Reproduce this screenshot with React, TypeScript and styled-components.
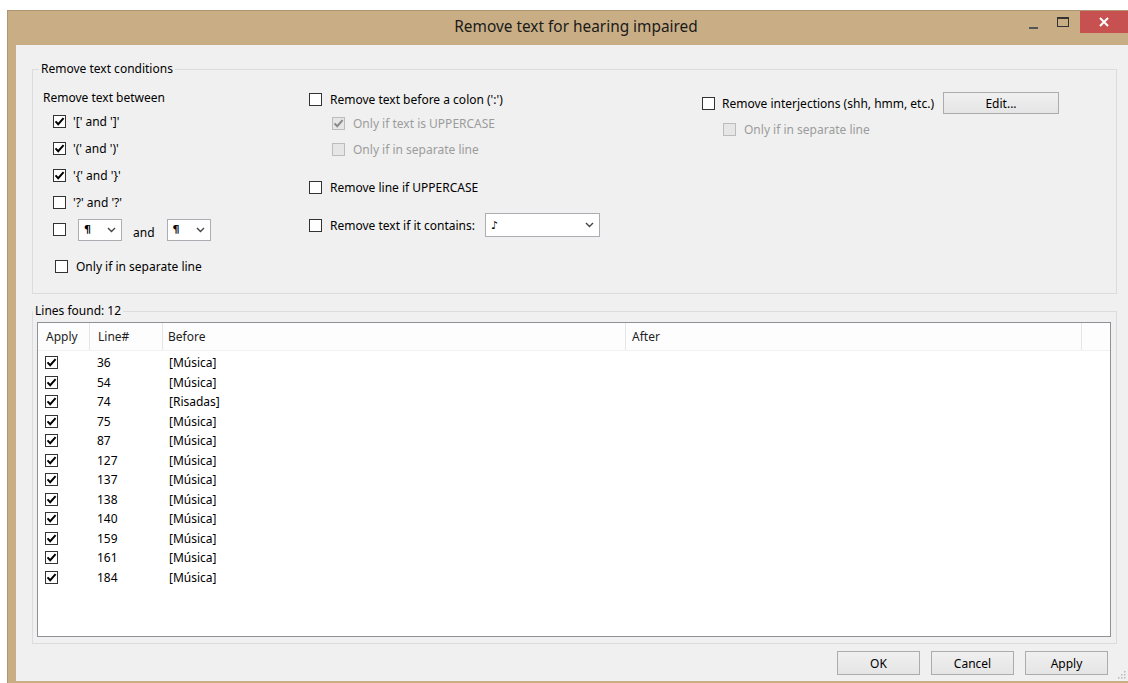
import React from 'react';
import styled, { createGlobalStyle } from 'styled-components';

const GlobalStyle = createGlobalStyle`
  * { box-sizing: border-box; }
  html, body { margin: 0; padding: 0; background: #ffffff; }
  body {
    font-family: 'Noto Sans', 'DejaVu Sans', sans-serif;
    font-size: 12px;
    color: #000000;
  }
`;

const Desktop = styled.div`
  width: 1128px;
  height: 683px;
  padding: 10px 0 0 7px;
  overflow: hidden;
`;

const Window = styled.div`
  width: 1121px;
  height: 673px;
  display: flex;
  flex-direction: column;
  background: #c9ae85;
  border-top: 1px solid #b09670;
  border-left: 1px solid #b09670;
`;

const TitleBar = styled.div`
  height: 34px;
  display: flex;
  align-items: flex-start;
`;

const Title = styled.div`
  flex: 1;
  padding-left: 124px;
  text-align: center;
  line-height: 32px;
  font-size: 15.4px;
  color: #1a1a1a;
`;

const CaptionButton = styled.div<{ $w: number; $close?: boolean }>`
  width: ${p => p.$w}px;
  height: 22px;
  display: flex;
  align-items: center;
  justify-content: center;
  background: ${p => (p.$close ? '#c75050' : 'transparent')};
`;

const Body = styled.div`
  flex: 1;
  padding: 0 0 2px 8px;
  display: flex;
`;

const Client = styled.div`
  position: relative;
  flex: 1;
  background: #f0f0f0;
  padding: 16px 11px 6px 16px;
  display: flex;
  flex-direction: column;
`;

const Group = styled.fieldset<{ $pad: string; $mt?: number }>`
  margin: ${p => p.$mt ?? 0}px 0 0 0;
  min-inline-size: 0;
  padding: ${p => p.$pad};
  border: 1px solid #dcdcdc;
`;

const Legend = styled.legend`
  margin-left: -4px;
  padding: 0 2px;
  line-height: 16px;
  font-size: 12px;
`;

const Conditions = styled.div`
  display: grid;
  grid-template-columns: 266px 393px 1fr;
`;

const Column = styled.div<{ $top?: number }>`
  display: flex;
  flex-direction: column;
  padding-top: ${p => p.$top ?? 0}px;
`;

const Heading = styled.div`
  line-height: 20px;
`;

const Row = styled.div<{ $h: number; $indent?: number; $gap?: number }>`
  height: ${p => p.$h}px;
  display: flex;
  align-items: center;
  padding-left: ${p => p.$indent ?? 0}px;
  margin-top: ${p => p.$gap ?? 0}px;
`;

const Box = styled.span<{ $disabled?: boolean }>`
  width: 13px;
  height: 13px;
  flex: none;
  display: inline-flex;
  align-items: center;
  justify-content: center;
  border: 1px solid ${p => (p.$disabled ? '#bcbcbc' : '#333333')};
  background: ${p => (p.$disabled ? '#e6e6e6' : '#ffffff')};
`;

const Label = styled.span<{ $disabled?: boolean; $gap?: number }>`
  margin-left: ${p => p.$gap ?? 8}px;
  color: ${p => (p.$disabled ? '#9c9c9c' : '#000000')};
  white-space: nowrap;
`;

const Select = styled.div<{ $w: number; $h: number; $ml: number }>`
  width: ${p => p.$w}px;
  height: ${p => p.$h}px;
  margin-left: ${p => p.$ml}px;
  display: flex;
  align-items: center;
  justify-content: space-between;
  padding: 0 5px 0 5px;
  background: #ffffff;
  border: 1px solid #abadb3;
  font-family: 'DejaVu Sans', sans-serif;
  font-size: 11px;
  font-weight: bold;
`;

const AndText = styled.span`
  margin-left: 11px;
  padding-top: 6px;
`;

const Button = styled.div<{ $w: number; $h: number; $ml?: number }>`
  width: ${p => p.$w}px;
  height: ${p => p.$h}px;
  margin-left: ${p => p.$ml ?? 0}px;
  display: flex;
  align-items: center;
  justify-content: center;
  border: 1px solid #acacac;
  background: linear-gradient(#f0f0f0, #e5e5e5);
  color: #000000;
`;

const ListBox = styled.div`
  height: 315px;
  background: #ffffff;
  border: 1px solid #8e9196;
  display: flex;
  flex-direction: column;
`;

const columns = '52px 73px 463px 456px 1fr';

const Header = styled.div`
  height: 28px;
  display: grid;
  grid-template-columns: ${columns};
  background: #fdfdfd;
  border-bottom: 1px solid #f2f2f2;
`;

const HeaderCell = styled.div<{ $pl: number; $last?: boolean }>`
  display: flex;
  align-items: center;
  padding-left: ${p => p.$pl}px;
  border-right: ${p => (p.$last ? 'none' : '1px solid #e5e5e5')};
  color: #1e1e1e;
`;

const Rows = styled.div`
  padding-top: 2px;
`;

const ItemRow = styled.div`
  height: 19.5px;
  display: grid;
  grid-template-columns: ${columns};
  align-items: center;
`;

const Cell = styled.div<{ $pl: number }>`
  display: flex;
  align-items: center;
  padding-left: ${p => p.$pl}px;
`;

const Footer = styled.div`
  margin-top: 7px;
  margin-right: 9px;
  display: flex;
  justify-content: flex-end;
  gap: 11px;
`;

const Grip = styled.svg`
  position: absolute;
  right: 2px;
  bottom: 2px;
`;

const Check = ({ disabled }: { disabled?: boolean }) => (
  <svg width="11" height="11" viewBox="0 0 11 11">
    <path
      d="M1.5 5.4 L4.2 8.2 L9.6 2.2"
      fill="none"
      stroke={disabled ? '#8a8a8a' : '#000000'}
      strokeWidth="2"
    />
  </svg>
);

const Checkbox = ({ checked, disabled }: { checked?: boolean; disabled?: boolean }) => (
  <Box $disabled={disabled}>{checked && <Check disabled={disabled} />}</Box>
);

const Chevron = () => (
  <svg width="9" height="6" viewBox="0 0 9 6">
    <path d="M1 1 L4.5 4.5 L8 1" fill="none" stroke="#444444" strokeWidth="1.4" />
  </svg>
);

const lines: [number, string][] = [
  [36, '[Música]'],
  [54, '[Música]'],
  [74, '[Risadas]'],
  [75, '[Música]'],
  [87, '[Música]'],
  [127, '[Música]'],
  [137, '[Música]'],
  [138, '[Música]'],
  [140, '[Música]'],
  [159, '[Música]'],
  [161, '[Música]'],
  [184, '[Música]'],
];

const brackets: [string, boolean][] = [
  ["'[' and ']'", true],
  ["'(' and ')'", true],
  ["'{' and '}'", true],
  ["'?' and '?'", false],
];

export default function App() {
  return (
    <Desktop>
      <GlobalStyle />
      <Window>
        <TitleBar>
          <Title>Remove text for hearing impaired</Title>
          <CaptionButton $w={26}>
            <svg width="9" height="14" viewBox="0 0 9 14">
              <rect x="0" y="12" width="9" height="2" fill="#555555" />
            </svg>
          </CaptionButton>
          <CaptionButton $w={34}>
            <svg width="12" height="10" viewBox="0 0 12 10">
              <rect x="0.5" y="0.5" width="11" height="9" fill="none" stroke="#333333" />
              <rect x="0" y="0" width="12" height="2" fill="#333333" />
            </svg>
          </CaptionButton>
          <CaptionButton $w={48} $close>
            <svg width="10" height="10" viewBox="0 0 10 10">
              <path d="M1 1 L9 9 M9 1 L1 9" stroke="#ffffff" strokeWidth="2" />
            </svg>
          </CaptionButton>
        </TitleBar>
        <Body>
          <Client>
            <Group $pad="11px 10px 13px 10px">
              <Legend>Remove text conditions</Legend>
              <Conditions>
                <Column>
                  <Heading>Remove text between</Heading>
                  {brackets.map(([text, on]) => (
                    <Row key={text} $h={27} $indent={10}>
                      <Checkbox checked={on} />
                      <Label $gap={7}>{text}</Label>
                    </Row>
                  ))}
                  <Row $h={27} $indent={10}>
                    <Checkbox />
                    <Select $w={44} $h={22} $ml={12}>
                      ¶<Chevron />
                    </Select>
                    <AndText>and</AndText>
                    <Select $w={44} $h={22} $ml={12}>
                      ¶<Chevron />
                    </Select>
                  </Row>
                  <Row $h={27} $indent={12} $gap={10}>
                    <Checkbox />
                    <Label>Only if in separate line</Label>
                  </Row>
                </Column>
                <Column>
                  <Row $h={22}>
                    <Checkbox />
                    <Label>Remove text before a colon (':')</Label>
                  </Row>
                  <Row $h={26} $indent={23}>
                    <Checkbox checked disabled />
                    <Label $disabled>Only if text is UPPERCASE</Label>
                  </Row>
                  <Row $h={26} $indent={23}>
                    <Checkbox disabled />
                    <Label $disabled>Only if in separate line</Label>
                  </Row>
                  <Row $h={26} $gap={12}>
                    <Checkbox />
                    <Label>Remove line if UPPERCASE</Label>
                  </Row>
                  <Row $h={26} $gap={12}>
                    <Checkbox />
                    <Label>Remove text if it contains:</Label>
                    <Select $w={115} $h={24} $ml={10}>
                      ♪<Chevron />
                    </Select>
                  </Row>
                </Column>
                <Column $top={2}>
                  <Row $h={26}>
                    <Checkbox />
                    <Label $gap={7}>Remove interjections (shh, hmm, etc.)</Label>
                    <Button $w={116} $h={22} $ml={9}>
                      Edit...
                    </Button>
                  </Row>
                  <Row $h={26} $indent={21}>
                    <Checkbox disabled />
                    <Label $disabled>Only if in separate line</Label>
                  </Row>
                </Column>
              </Conditions>
            </Group>

            <Group $pad="3px 5px 6px 4px" $mt={9}>
              <Legend>Lines found: 12</Legend>
              <ListBox>
                <Header>
                  <HeaderCell $pl={8}>Apply</HeaderCell>
                  <HeaderCell $pl={8}>Line#</HeaderCell>
                  <HeaderCell $pl={5}>Before</HeaderCell>
                  <HeaderCell $pl={6}>After</HeaderCell>
                  <HeaderCell $pl={0} $last />
                </Header>
                <Rows>
                  {lines.map(([n, before]) => (
                    <ItemRow key={n}>
                      <Cell $pl={7}>
                        <Checkbox checked />
                      </Cell>
                      <Cell $pl={7}>{n}</Cell>
                      <Cell $pl={6}>{before}</Cell>
                      <Cell $pl={6} />
                      <Cell $pl={0} />
                    </ItemRow>
                  ))}
                </Rows>
              </ListBox>
            </Group>

            <Footer>
              <Button $w={83} $h={24}>OK</Button>
              <Button $w={83} $h={24}>Cancel</Button>
              <Button $w={83} $h={24}>Apply</Button>
            </Footer>

            <Grip width="9" height="9" viewBox="0 0 9 9">
              {[
                [7, 1],
                [7, 4],
                [4, 4],
                [7, 7],
                [4, 7],
                [1, 7],
              ].map(([x, y]) => (
                <rect key={`${x}-${y}`} x={x} y={y} width="1.5" height="1.5" fill="#b8b8b8" />
              ))}
            </Grip>
          </Client>
        </Body>
      </Window>
    </Desktop>
  );
}
